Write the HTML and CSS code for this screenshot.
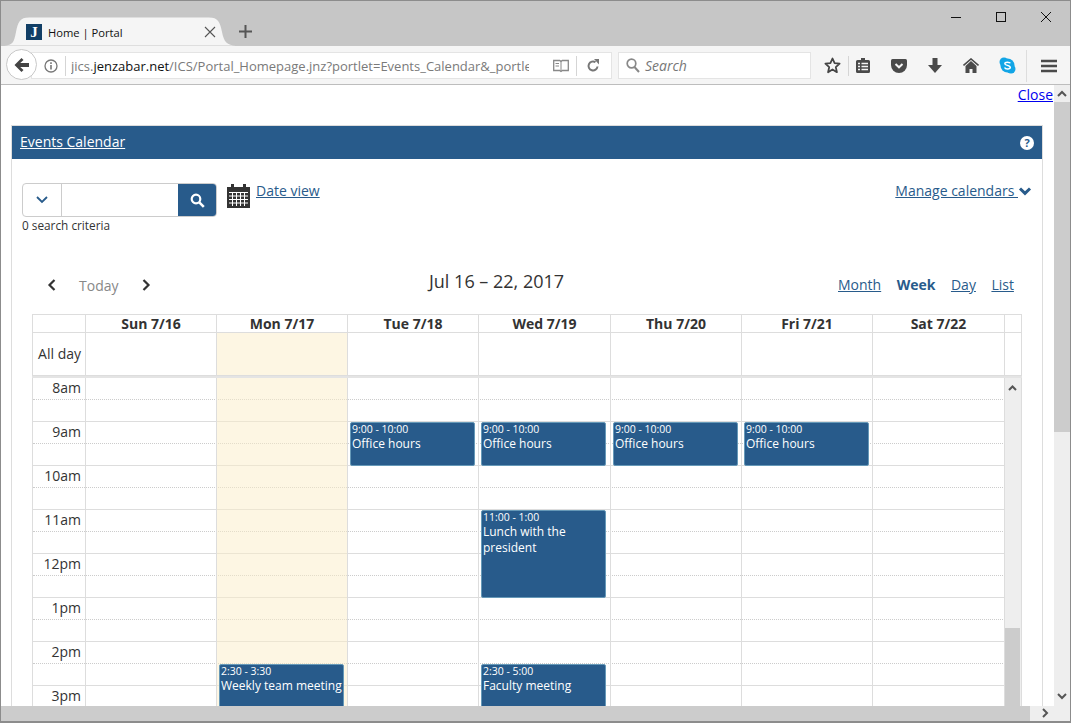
FILE: index.html
```html
<!DOCTYPE html>
<html lang="en">
<head>
<meta charset="utf-8">
<title>Home | Portal</title>
<link rel="stylesheet" href="styles.css">
</head>
<body>
<div class="window">
  <header class="titlebar">
    <div class="tab">
      <svg class="tab-shape" width="232" height="29" viewBox="0 0 232 29"><path d="M0 28.500C9 28.500 10 25 12 15C14 5 16 .5 25 .5H205C214 .5 216 5 218 15C220 25 223 28.500 232 28.500Z" fill="#f5f5f5"/></svg>
      <span class="favicon">J</span>
      <span class="tab-title">Home | Portal</span>
      <svg class="tab-close" width="12" height="12" viewBox="0 0 12 12"><path d="M1 1l10 10M11 1L1 11" stroke="#555" stroke-width="1.100" fill="none"/></svg>
    </div>
    <svg class="newtab" width="13" height="13" viewBox="0 0 13 13"><path d="M6.500 0v13M0 6.500h13" stroke="#555" stroke-width="2" fill="none"/></svg>
    <div class="win-controls">
      <svg width="10" height="10" viewBox="0 0 10 10"><path d="M0 5.500h10" stroke="#111" fill="none"/></svg>
      <svg width="10" height="10" viewBox="0 0 10 10"><rect x=".5" y=".5" width="9" height="9" stroke="#111" fill="none"/></svg>
      <svg width="10" height="10" viewBox="0 0 10 10"><path d="M0 0l10 10M10 0L0 10" stroke="#111" fill="none"/></svg>
    </div>
  </header>

  <nav class="toolbar">
    <span class="back"><svg width="15" height="14" viewBox="0 0 15 14"><path d="M7.500 0L.5 7l7 7 2-2-3.300-3H15V5H6.200l3.300-3z" fill="#444"/></svg></span>
    <div class="urlbar">
      <svg class="info" width="14" height="14" viewBox="0 0 14 14"><circle cx="7" cy="7" r="6" fill="none" stroke="#777" stroke-width="1.300"/><path d="M7 6v4.500M7 3.300v1.600" stroke="#777" stroke-width="1.600" fill="none"/></svg>
      <span class="sep"></span>
      <div class="url"><span class="dim">jics.</span><span class="domain">jenzabar.net</span><span class="dim">/ICS/Portal_Homepage.jnz?portlet=Events_Calendar&amp;_portlet=Events_Calendar</span></div>
      <svg class="reader" width="16" height="14" viewBox="0 0 16 14"><path d="M.7 1.500h6L8 2.500l1.300-1h6v10h-6L8 12.500l-1.300-1h-6z" fill="none" stroke="#888" stroke-width="1.300"/><path d="M8 2.500v9M2.500 4.500h3.500M2.500 7h3.500" stroke="#888" fill="none"/></svg>
      <span class="sep sep-r"></span>
      <svg class="reload" width="14" height="14" viewBox="0 0 14 14"><path d="M11.500 7.500A4.500 4.500 0 1 1 9.500 3.200" fill="none" stroke="#777" stroke-width="2"/><path d="M8 0h5v5.500z" fill="#777"/></svg>
    </div>
    <div class="searchbar">
      <svg width="14" height="15" viewBox="0 0 14 15"><circle cx="5.500" cy="5.500" r="4.300" fill="none" stroke="#888" stroke-width="1.700"/><path d="M8.500 9l4.500 5" stroke="#888" stroke-width="2" fill="none"/></svg>
      <span>Search</span>
    </div>
    <svg class="tool star" width="17" height="17" viewBox="0 0 17 17"><path d="M8.500 1.500l2.100 4.700 5 .5-3.800 3.400 1.100 5.100-4.400-2.700-4.400 2.700 1.100-5.100L1.400 6.700l5-.5z" fill="none" stroke="#444" stroke-width="1.800" stroke-linejoin="round"/></svg>
    <span class="sep tool-sep"></span>
    <svg class="tool clip" width="14" height="15" viewBox="0 0 14 15"><path d="M5 0h4v2h3.500q1.500 0 1.500 1.500v10q0 1.500-1.500 1.500h-11Q0 15 0 13.500v-10Q0 2 1.500 2H5z" fill="#4a4a4a"/><path d="M2 5.500h2M5.500 5.500h6.500M2 8.500h2M5.500 8.500h6.500M2 11.500h2M5.500 11.500h6.500" stroke="#f5f5f5" stroke-width="1.500" fill="none"/></svg>
    <svg class="tool pocket" width="16" height="14" viewBox="0 0 16 14"><path d="M1.500 0h13Q16 0 16 1.500V6a8 8 0 0 1-16 0V1.500Q0 0 1.500 0z" fill="#4a4a4a"/><path d="M4.500 5L8 8.300 11.500 5" stroke="#f5f5f5" stroke-width="2" fill="none"/></svg>
    <svg class="tool down" width="14" height="15" viewBox="0 0 14 15"><path d="M4.500 0h5v7H14l-7 8-7-8h4.500z" fill="#4a4a4a"/></svg>
    <svg class="tool home" width="16" height="15" viewBox="0 0 16 15"><path d="M8 3l5.500 5v7H9.500v-4h-3v4H2.500V8z" fill="#4a4a4a"/><path d="M.5 7.500L8 1l7.500 6.500" stroke="#4a4a4a" stroke-width="1.600" fill="none"/></svg>
    <svg class="tool skype" width="17" height="17" viewBox="0 0 17 17"><circle cx="5" cy="5" r="4.500" fill="#12a5e6"/><circle cx="12" cy="12" r="4.500" fill="#12a5e6"/><circle cx="8.500" cy="8.500" r="7" fill="#12a5e6"/><path d="M11.300 6.300C10.800 5 6 4.600 5.800 6.600C5.700 8.800 11.500 8 11.300 10.500C11.100 12.500 6.300 12.300 5.600 10.500" fill="none" stroke="#fff" stroke-width="1.500"/></svg>
    <span class="sep tool-sep2"></span>
    <svg class="tool burger" width="16" height="14" viewBox="0 0 16 14"><path d="M0 2h16M0 7h16M0 12h16" stroke="#4a4a4a" stroke-width="2.600" fill="none"/></svg>
  </nav>

  <div class="viewport">
    <main class="page">
      <div class="close-row"><a href="#" class="close">Close</a></div>
      <section class="panel">
        <div class="panel-head">
          <a href="#" class="panel-title">Events Calendar</a>
          <svg width="14" height="14" viewBox="0 0 14 14"><circle cx="7" cy="7" r="7" fill="#fff"/><text x="7" y="11" text-anchor="middle" class="help-q">?</text></svg>
        </div>
        <div class="panel-body">
          <div class="filter-row">
            <div class="filter-left">
              <div class="search-block">
                <div class="search-widget">
                  <span class="sw-toggle"><svg width="12" height="8" viewBox="0 0 12 8"><path d="M1 1l5 5 5-5" stroke="#285b8b" stroke-width="1.800" fill="none"/></svg></span>
                  <span class="sw-input"></span>
                  <span class="sw-btn"><svg width="15" height="15" viewBox="0 0 15 15"><circle cx="6" cy="6" r="4.300" fill="none" stroke="#fff" stroke-width="2.200"/><path d="M9.300 9.300l4.500 4.500" stroke="#fff" stroke-width="2.600" fill="none"/></svg></span>
                </div>
                <div class="criteria">0 search criteria</div>
              </div>
              <svg class="cal-icon" width="23" height="24" viewBox="0 0 23 24"><path d="M0 3h4V0h3v3h9V0h3v3h4v21H0z" fill="#333"/><path d="M2 8.500h19M2 12h19M2 15.500h19M2 19h19M5.500 8v14M9.500 8v14M13.500 8v14M17.500 8v14" stroke="#fff" fill="none"/></svg>
              <a href="#" class="link date-view">Date view</a>
            </div>
            <a href="#" class="link manage">Manage calendars <svg width="14" height="9" viewBox="0 0 14 9"><path d="M2 1.500L7 6.300l5-4.800" stroke="#285b8b" stroke-width="3" fill="none"/></svg></a>
          </div>

          <div class="cal">
            <div class="cal-nav">
              <div class="cal-nav-left">
                <svg width="9" height="12" viewBox="0 0 9 12"><path d="M7.500 1L2.500 6l5 5" stroke="#333" stroke-width="2.200" fill="none"/></svg>
                <span class="today">Today</span>
                <svg width="9" height="12" viewBox="0 0 9 12"><path d="M1.500 1l5 5-5 5" stroke="#333" stroke-width="2.200" fill="none"/></svg>
              </div>
              <h2 class="cal-title">Jul 16 – 22, 2017</h2>
              <div class="cal-views">
                <a href="#" class="link">Month</a>
                <b class="active">Week</b>
                <a href="#" class="link">Day</a>
                <a href="#" class="link">List</a>
              </div>
            </div>

            <div class="grid-frame">
              <div class="cols head-row">
                <div></div><div>Sun 7/16</div><div>Mon 7/17</div><div>Tue 7/18</div><div>Wed 7/19</div><div>Thu 7/20</div><div>Fri 7/21</div><div>Sat 7/22</div><div></div>
              </div>
              <div class="cols allday-row">
                <div class="allday-label">All day</div><div></div><div class="is-today"></div><div></div><div></div><div></div><div></div><div></div><div></div>
              </div>
              <div class="time-area">
                <div class="time-scroll">
                  <div class="slots">
                    <div class="slot"><span>8am</span></div><div class="slot half"></div>
                    <div class="slot"><span>9am</span></div><div class="slot half"></div>
                    <div class="slot"><span>10am</span></div><div class="slot half"></div>
                    <div class="slot"><span>11am</span></div><div class="slot half"></div>
                    <div class="slot"><span>12pm</span></div><div class="slot half"></div>
                    <div class="slot"><span>1pm</span></div><div class="slot half"></div>
                    <div class="slot"><span>2pm</span></div><div class="slot half"></div>
                    <div class="slot"><span>3pm</span></div><div class="slot half"></div>
                  </div>
                  <div class="cols day-cols">
                    <div></div>
                    <div></div>
                    <div class="is-today-soft"><div class="event at-1430 h-60"><small>2:30 - 3:30</small><span>Weekly team meeting</span></div></div>
                    <div><div class="event at-900 h-60"><small>9:00 - 10:00</small><span>Office hours</span></div></div>
                    <div>
                      <div class="event at-900 h-60"><small>9:00 - 10:00</small><span>Office hours</span></div>
                      <div class="event at-1100 h-120"><small>11:00 - 1:00</small><span>Lunch with the president</span></div>
                      <div class="event at-1430 h-150"><small>2:30 - 5:00</small><span>Faculty meeting</span></div>
                    </div>
                    <div><div class="event at-900 h-60"><small>9:00 - 10:00</small><span>Office hours</span></div></div>
                    <div><div class="event at-900 h-60"><small>9:00 - 10:00</small><span>Office hours</span></div></div>
                    <div></div>
                  </div>
                </div>
                <div class="inner-scroll">
                  <svg width="9" height="6" viewBox="0 0 9 6"><path d="M1 5l3.500-3.500L8 5" stroke="#555" stroke-width="2" fill="none"/></svg>
                  <div class="inner-thumb"></div>
                </div>
              </div>
            </div>
          </div>
        </div>
      </section>
    </main>
    <div class="vscroll">
      <svg width="10" height="7" viewBox="0 0 10 7"><path d="M1 6l4-4 4 4" stroke="#555" stroke-width="2" fill="none"/></svg>
      <div class="vthumb"></div>
      <svg class="vdown" width="10" height="7" viewBox="0 0 10 7"><path d="M1 1l4 4 4-4" stroke="#555" stroke-width="2" fill="none"/></svg>
    </div>
  </div>
  <div class="hscroll">
    <div class="hthumb"></div>
    <svg width="7" height="10" viewBox="0 0 7 10"><path d="M1 1l4 4-4 4" stroke="#555" stroke-width="2" fill="none"/></svg>
  </div>
</div>
</body>
</html>
```
FILE: styles.css
```css
* { box-sizing: border-box; }
html, body { margin: 0; padding: 0; overflow: hidden; }
body { font-family: "Open Sans", "Noto Sans", sans-serif; font-size: 14px; color: #333; background: #fff; }
a { color: inherit; }

.window { width: 1071px; height: 723px; display: flex; flex-direction: column; border: 1px solid #8c8c8c; border-bottom-width: 2px; background: #fff; overflow: hidden; }

/* browser chrome */
.titlebar { height: 45px; flex: none; background: #c6c6c6; display: flex; align-items: flex-end; position: relative; }
.tab { width: 232px; height: 28px; margin-left: 3px; position: relative; display: flex; align-items: center; padding-left: 22px; }
.tab-shape { position: absolute; left: 0; top: -1px; }
.favicon { position: relative; width: 16px; height: 16px; background: #123f66; color: #fff; font: bold 15px/16px "Liberation Serif", serif; text-align: center; }
.tab-title { position: relative; margin-left: 6px; font-size: 11.200px; color: #111; }
.tab-close { position: absolute; left: 200px; top: 8px; }
.newtab { margin: 0 0 8px 3px; }
.win-controls { position: absolute; right: 19px; top: 11px; display: flex; gap: 35px; }
.win-controls svg { display: block; }

.toolbar { height: 39px; flex: none; background: #f5f5f5; border-bottom: 1px solid #bdbdbd; display: flex; align-items: center; position: relative; padding: 1px 0 0 30px; }
.back { position: absolute; left: 5px; top: 3px; width: 31px; height: 31px; border-radius: 50%; background: #fff; border: 1px solid #c8c8c8; display: flex; align-items: center; justify-content: center; }
.urlbar { width: 581px; height: 27px; flex: none; background: #fff; border: 1px solid #e4e4e4; display: flex; align-items: center; padding-left: 12px; }
.info { flex: none; }
.sep { flex: none; width: 1px; height: 20px; background: #d5d5d5; display: block; }
.urlbar .sep { margin-left: 7px; }
.url { width: 458px; flex: none; margin-left: 5px; white-space: nowrap; overflow: hidden; font-size: 13px; line-height: 20px; }
.dim { color: #7a7a7a; }
.domain { color: #111; }
.reader { margin-left: 24px; flex: none; }
.urlbar .sep-r { margin-left: 7px; }
.reload { margin-left: 9px; flex: none; }
.searchbar { width: 193px; height: 27px; flex: none; margin-left: 6px; background: #fff; border: 1px solid #e4e4e4; display: flex; align-items: center; padding-left: 7px; gap: 5px; font-style: italic; font-size: 14px; color: #777; }
.tool { flex: none; }
.star { margin-left: 13px; }
.tool-sep { margin-left: 7px; }
.clip { margin-left: 7px; }
.pocket { margin-left: 21px; }
.down { margin-left: 21px; }
.home { margin-left: 21px; }
.skype { margin-left: 20px; }
.tool-sep2 { margin-left: 10px; height: 32px; background: #ddd; }
.burger { margin-left: 14px; }

/* page */
.viewport { flex: 1; min-height: 0; display: flex; }
.page { flex: 1; min-width: 0; overflow: hidden; }
.close-row { height: 40px; text-align: right; line-height: 20px; padding-right: 1px; }
.close { color: #0000ee; }
.panel { margin-left: 10px; width: 1032px; border: 1px solid #ddd; border-bottom: 0; }
.panel-head { height: 33px; background: #285b8b; color: #fff; display: flex; align-items: center; justify-content: space-between; padding: 0 8px; }
.panel-title { font-size: 14px; line-height: 19px; margin-top: -2px; }
.help-q { font: bold 11px "Open Sans", sans-serif; fill: #285b8b; }
.panel-body { padding: 24px 10px 0; }

.filter-row { display: flex; justify-content: space-between; height: 54px; }
.filter-left { display: flex; align-items: flex-start; }
.search-widget { width: 195px; height: 34px; display: flex; border: 1px solid #ccc; border-radius: 4px; overflow: hidden; }
.sw-toggle { width: 39px; border-right: 1px solid #ccc; display: flex; align-items: center; justify-content: center; }
.sw-input { flex: 1; }
.sw-btn { width: 38px; background: #285b8b; display: flex; align-items: center; justify-content: center; }
.criteria { font-size: 11.800px; line-height: 16px; }
.cal-icon { margin: 1px 6px 0 10px; }
.link { color: #285b8b; }
.date-view { line-height: 18px; margin-top: -1px; }
.manage { margin-top: -1px; line-height: 18px; }

.cal { margin-left: 10px; width: 990px; }
.cal-nav { height: 77px; display: flex; align-items: flex-start; padding-top: 32px; }
.cal-nav-left { width: 397px; padding-left: 15px; display: flex; align-items: center; height: 18px; margin-top: 7px; }
.today { color: #888; margin: 0 23px 0 23px; }
.cal-title { margin: 0; font-size: 18px; font-weight: 400; line-height: 24px; width: 409px; }
.cal-views { display: flex; gap: 15.500px; line-height: 18px; margin-top: 7px; }
.active { color: #285b8b; font-weight: 700; }

.cols { display: grid; grid-template-columns: 54px 131px 131px 131px 132px 131px 131px 132px 17px; }
.cols > div { border-right: 1px solid #ddd; }
.head-row { height: 19px; border-top: 1px solid #ddd; border-bottom: 1px solid #ddd; font-size: 14px; font-weight: 700; line-height: 17px; text-align: center; }
.head-row > div:first-child, .allday-row > div:first-child { border-left: 1px solid #ddd; }
.allday-row { height: 43px; border-bottom: 1px solid #ddd; }
.allday-label { padding-right: 4px; text-align: right; line-height: 42px; font-size: 14px; }
.is-today { background: #fdf6e3; }
.is-today-soft { background: rgba(251, 237, 199, .5); }

.time-area { display: flex; height: 330px; border-top: 2px solid #e4e4e4; }
.time-scroll { width: 973px; position: relative; overflow: hidden; border-left: 1px solid #ddd; }
.slots { margin-top: -1px; }
.slot { height: 22px; border-top: 1px solid #ddd; }
.slot span { display: block; width: 48px; text-align: right; line-height: 20px; font-size: 14px; }
.slot.half { border-top: 1px dotted #ccc; }
.day-cols { position: absolute; left: -1px; top: 0; bottom: 0; width: 990px; }
.day-cols > div { position: relative; }
.event { position: absolute; left: 2px; width: 125px; background: #285b8b; border: 1px solid #6699b8; border-radius: 2px; color: #fff; padding: 0 1px; overflow: hidden; }
.event small { display: block; font-size: 10.500px; line-height: 14px; margin-top: -1px; }
.event span { display: block; font-size: 12px; line-height: 16px; }
.at-900 { top: 44px; }
.at-1100 { top: 132px; }
.at-1430 { top: 286px; }
.h-60 { height: 44px; }
.h-120 { height: 88px; }
.h-150 { height: 110px; }

.inner-scroll { width: 17px; background: #eee; position: relative; padding: 4px 1px 0 0; border-right: 1px solid #ddd; }
.inner-scroll svg { display: block; margin: 3px auto 0; }
.inner-thumb { position: absolute; left: 0; width: 15px; top: 250px; bottom: 0; background: #ccc; }

.vscroll { width: 16px; flex: none; background: #eee; position: relative; }
.vscroll svg { position: absolute; left: 3px; top: 5px; }
.vscroll .vdown { top: auto; bottom: 6px; }
.vthumb { position: absolute; left: 0; right: 0; top: 17px; height: 330px; background: #ccc; }
.hscroll { height: 15px; flex: none; background: #eee; position: relative; }
.hthumb { position: absolute; left: 0; top: 0; bottom: 0; width: 1029px; background: #ccc; }
.hscroll svg { position: absolute; left: 1041px; top: 2px; }
```
